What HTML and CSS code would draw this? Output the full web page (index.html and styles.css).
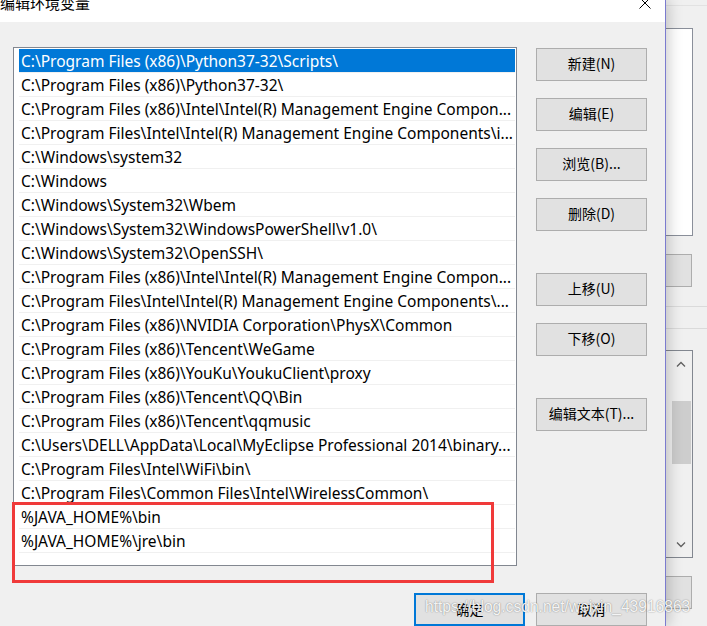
FILE: index.html
```html
<!DOCTYPE html>
<html lang="zh-CN">
<head>
<meta charset="utf-8">
<title>编辑环境变量</title>
<link rel="stylesheet" href="styles.css">
</head>
<body>
<div class="screen">
  <div class="dialog">
    <div class="titlebar">
      <span class="title">编辑环境变量</span>
      <svg class="close" width="12" height="12" viewBox="0 0 12 12"><path d="M0.5 0.5 L11.5 11.5 M11.5 0.5 L0.5 11.5" stroke="#000" stroke-width="1" fill="none"/></svg>
    </div>
    <div class="body">
      <div class="main">
        <div class="listbox">
          <div class="item selected">C:\Program Files (x86)\Python37-32\Scripts\</div>
          <div class="item">C:\Program Files (x86)\Python37-32\</div>
          <div class="item">C:\Program Files (x86)\Intel\Intel(R) Management Engine Compon...</div>
          <div class="item">C:\Program Files\Intel\Intel(R) Management Engine Components\i...</div>
          <div class="item">C:\Windows\system32</div>
          <div class="item">C:\Windows</div>
          <div class="item">C:\Windows\System32\Wbem</div>
          <div class="item">C:\Windows\System32\WindowsPowerShell\v1.0\</div>
          <div class="item">C:\Windows\System32\OpenSSH\</div>
          <div class="item">C:\Program Files (x86)\Intel\Intel(R) Management Engine Compon...</div>
          <div class="item">C:\Program Files\Intel\Intel(R) Management Engine Components\...</div>
          <div class="item">C:\Program Files (x86)\NVIDIA Corporation\PhysX\Common</div>
          <div class="item">C:\Program Files (x86)\Tencent\WeGame</div>
          <div class="item">C:\Program Files (x86)\YouKu\YoukuClient\proxy</div>
          <div class="item">C:\Program Files (x86)\Tencent\QQ\Bin</div>
          <div class="item">C:\Program Files (x86)\Tencent\qqmusic</div>
          <div class="item">C:\Users\DELL\AppData\Local\MyEclipse Professional 2014\binary...</div>
          <div class="item">C:\Program Files\Intel\WiFi\bin\</div>
          <div class="item">C:\Program Files\Common Files\Intel\WirelessCommon\</div>
          <div class="item">%JAVA_HOME%\bin</div>
          <div class="item">%JAVA_HOME%\jre\bin</div>
          <div class="item"></div>
        </div>
        <div class="side">
          <button class="btn">新建(N)</button>
          <button class="btn">编辑(E)</button>
          <button class="btn">浏览(B)...</button>
          <button class="btn">删除(D)</button>
          <button class="btn gap-lg">上移(U)</button>
          <button class="btn">下移(O)</button>
          <button class="btn gap-lg">编辑文本(T)...</button>
        </div>
      </div>
      <div class="footer">
        <button class="btn primary">确定</button>
        <button class="btn">取消</button>
      </div>
    </div>
    <div class="annot"></div>
  </div>
  <div class="behind">
    <div class="b-top"></div>
    <div class="b-box"></div>
    <div class="b-btn"></div>
    <div class="b-line first"></div>
    <div class="b-line"></div>
    <div class="b-scroll">
      <svg class="chev" width="10" height="6" viewBox="0 0 10 6"><path d="M1 5.5 L5 1.5 L9 5.5" stroke="#606060" stroke-width="1.3" fill="none"/></svg>
      <div class="thumb"></div>
      <svg class="chev down" width="10" height="6" viewBox="0 0 10 6"><path d="M1 0.5 L5 4.5 L9 0.5" stroke="#606060" stroke-width="1.3" fill="none"/></svg>
    </div>
    <div class="b-btn last"></div>
  </div>
  <div class="watermark">https://blog.csdn.net/weixin_43916863</div>
</div>
</body>
</html>
```

FILE: styles.css
```css
html, body {
  margin: 0;
  padding: 0;
  background: #f0f0f0;
}

.screen {
  position: relative;
  display: flex;
  width: 707px;
  height: 626px;
  overflow: hidden;
}

.dialog {
  position: relative;
  z-index: 1;
  width: 666px;
  flex: 0 0 666px;
  box-sizing: border-box;
  border-right: 1px solid #7b7bcf;
  background: #f0f0f0;
  box-shadow: 2px 0 14px rgba(0, 0, 0, 0.22);
  display: flex;
  flex-direction: column;
}

.titlebar {
  height: 22px;
  background: #ffffff;
  display: flex;
  justify-content: space-between;
  align-items: flex-start;
  overflow: hidden;
}

.title {
  font-family: "Noto Sans CJK SC", sans-serif;
  font-size: 15px;
  line-height: 15px;
  margin-top: -5px;
  margin-left: 0;
  color: #000;
}

.close {
  margin-top: -3px;
  margin-right: 14px;
}

.body {
  flex: 1;
  padding: 25px 18px 0 13px;
  display: flex;
  flex-direction: column;
}

.main {
  display: flex;
  gap: 19px;
}

.listbox {
  width: 504px;
  height: 519px;
  box-sizing: border-box;
  border: 1px solid #828790;
  background: #ffffff;
  padding: 1px 1px 0 5px;
  overflow: hidden;
}

.item {
  height: 24px;
  box-sizing: border-box;
  border-bottom: 1px solid #f0f0f0;
  padding-left: 2px;
  padding-top: 1px;
  line-height: 22px;
  font-family: "Noto Sans", "Noto Sans CJK SC", sans-serif;
  font-size: 15.5px;
  color: #000;
  white-space: nowrap;
  overflow: hidden;
}

.item.selected {
  background: #0078d7;
  color: #ffffff;
}

.side {
  display: flex;
  flex-direction: column;
  width: 111px;
  padding-top: 1px;
}

.btn {
  width: 111px;
  height: 33px;
  box-sizing: border-box;
  border: 1px solid #adadad;
  background: #e1e1e1;
  font-family: "Noto Sans CJK SC", sans-serif;
  font-size: 14px;
  line-height: 18px;
  color: #000;
  padding: 0 0 3px 0;
  margin: 0;
}

.side .btn + .btn {
  margin-top: 17px;
}

.side .btn.gap-lg {
  margin-top: 42px;
}

.footer {
  display: flex;
  justify-content: flex-end;
  gap: 11px;
  margin-top: 27px;
}

.btn.primary {
  border: 2px solid #0078d7;
}

.footer .btn {
  padding-bottom: 1px;
}

.annot {
  position: absolute;
  left: 12px;
  top: 502px;
  width: 482px;
  height: 81px;
  box-sizing: border-box;
  border: 3px solid #f03a3a;
}

.behind {
  position: relative;
  z-index: 0;
  flex: 1;
  background: #f0f0f0;
  display: flex;
  flex-direction: column;
}

.b-top {
  height: 5px;
  border-bottom: 1px solid #e2e2e2;
}

.b-box {
  margin-top: 22px;
  width: 27px;
  height: 208px;
  box-sizing: border-box;
  border: 1px solid #8a8f9a;
  border-left: none;
  background: #ffffff;
}

.b-btn {
  margin-top: 18px;
  width: 26px;
  height: 33px;
  box-sizing: border-box;
  border: 1px solid #adadad;
  border-left: none;
  background: #e1e1e1;
}

.b-btn.last {
  margin-top: 18px;
}

.b-line {
  margin-top: 21px;
  height: 1px;
  background: #dadada;
}

.b-line.first {
  margin-top: 19px;
}

.b-scroll {
  margin-top: 21px;
  width: 27px;
  height: 208px;
  box-sizing: border-box;
  border: 1px solid #828790;
  border-left: none;
  background: #f0f0f0;
  display: flex;
  flex-direction: column;
  align-items: center;
  padding-top: 10px;
}

.chev {
  margin-left: 4px;
}

.thumb {
  margin-top: 34px;
  margin-left: 4px;
  width: 19px;
  height: 63px;
  background: #cdcdcd;
}

.chev.down {
  margin-top: auto;
  margin-bottom: 9px;
}

.watermark {
  position: absolute;
  z-index: 2;
  left: 425px;
  top: 598px;
  font-family: "Liberation Sans", Arial, sans-serif;
  font-size: 15.6px;
  color: rgba(255, 255, 255, 0.92);
  text-shadow: 0 0 1px rgba(0, 0, 0, 0.35), 0 0 2px rgba(0, 0, 0, 0.2);
  white-space: nowrap;
}
```
